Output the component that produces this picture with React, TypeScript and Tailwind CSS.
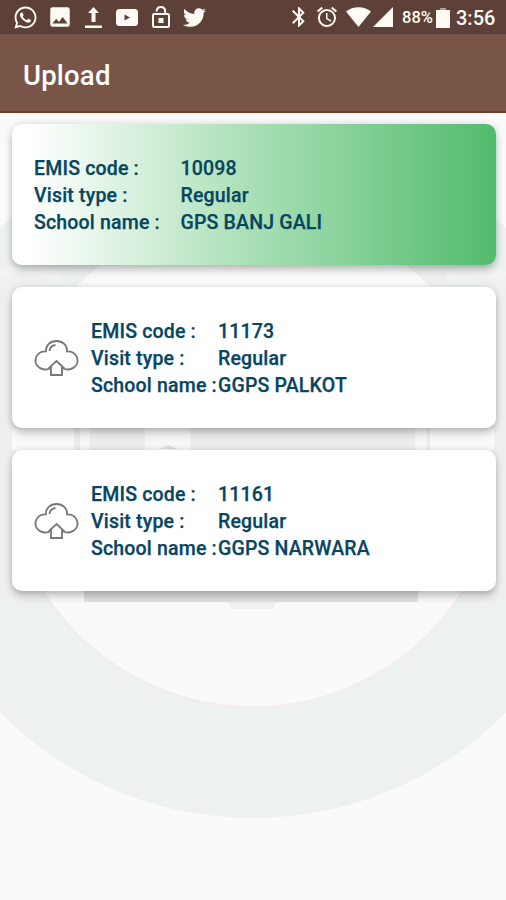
import { FaTwitter, FaWhatsapp } from "react-icons/fa";
import { MdAlarm, MdBluetooth, MdImage } from "react-icons/md";

type Visit = { code: string; type: string; school: string; uploaded?: boolean };

const visits: Visit[] = [
  { code: "10098", type: "Regular", school: "GPS BANJ GALI", uploaded: true },
  { code: "11173", type: "Regular", school: "GGPS PALKOT" },
  { code: "11161", type: "Regular", school: "GGPS NARWARA" },
];

function StatusBar() {
  return (
    <div className="flex h-[34px] items-center bg-[#5d4037] pl-[13px] text-[#fffaf3]">
      <FaWhatsapp className="size-[25px] shrink-0" />
      <MdImage className="ml-[9px] size-[26px] shrink-0" />
      <svg className="ml-[12px] h-[23px] w-[17px] shrink-0" viewBox="0 0 17 23" fill="currentColor">
        <path d="M8.500 1 14 7h-3.500v9h-4V7H3z" />
        <path d="M0 19.500h17V22H0z" />
      </svg>
      <svg className="ml-[14px] h-[17px] w-[22px] shrink-0" viewBox="0 0 22 17">
        <rect width="22" height="17" rx="3.5" fill="currentColor" />
        <path d="m8.500 5.500 5.500 3-5.500 3z" fill="#5d4037" />
      </svg>
      <svg className="ml-[14px] h-[22px] w-[18px] shrink-0" viewBox="0 0 18 22" fill="none" stroke="currentColor" strokeWidth="2">
        <rect x="1" y="8" width="16" height="13" rx="1.2" />
        <path d="M4.500 5.500C4.800 2.500 6.300 1 8.800 1s4.400 1.700 4.400 4.500V8" />
        <rect x="6.5" y="12" width="5" height="5" fill="currentColor" stroke="none" />
      </svg>
      <FaTwitter className="ml-[13px] size-[23px] shrink-0" />
      <MdBluetooth className="ml-[81px] size-[24px] shrink-0" />
      <MdAlarm className="ml-[4px] size-[24px] shrink-0" />
      <svg className="ml-[7px] h-[20px] w-[25px] shrink-0" viewBox="0 0 25 20" fill="currentColor">
        <path d="M0 4.500C7-1.300 18-1.300 25 4.500L12.500 20z" />
      </svg>
      <svg className="ml-[2px] size-[20px] shrink-0" viewBox="0 0 20 20" fill="currentColor">
        <path d="M20 0v20H0z" />
      </svg>
      <span className="ml-[9px] w-[34px] pt-[3px] text-[16.5px] font-medium whitespace-nowrap">88%</span>
      <svg className="mt-[2px] h-[20px] w-[14px] shrink-0" viewBox="0 0 14 20" fill="currentColor">
        <path d="M4 0h6v2H4z" opacity=".5" />
        <path d="M0 2h14v18H0z" />
      </svg>
      <span className="ml-[6px] pt-[2px] text-[20px] font-medium whitespace-nowrap">3:56</span>
    </div>
  );
}

function CloudUpload() {
  return (
    <svg className="h-[38px] w-[45px] shrink-0" viewBox="0 0 45 38" fill="none" stroke="#777" strokeWidth="1.8" strokeLinejoin="round">
      <path d="M16 29.500C12 31.500 6 30.500 3 26.500-1 20 3.500 12 12 12.500 11.500 6 16.500 2 22.500 2S33.500 6 33 12.500c8.500-.5 13 7.500 9 14-3 4-9 5-13 3" />
      <path d="m22.500 22 7 6.500H28V36H17v-7.500h-1.500z" strokeLinejoin="miter" />
      <path d="M15.500 12c.3-3.300 2.500-5.600 6-6" />
    </svg>
  );
}

function VisitCard({ visit }: { visit: Visit }) {
  const rows = [
    ["EMIS code :", visit.code],
    ["Visit type :", visit.type],
    ["School name :", visit.school],
  ];
  return (
    <div
      className={`flex h-[141px] items-center rounded-[10px] pl-[22px] shadow-[0_6px_8px_-1px_rgba(0,0,0,0.22),0_0_7px_rgba(0,0,0,0.14)] ${
        visit.uploaded ? "bg-[linear-gradient(90deg,#fff_4%,#a8dfb5_50%,#52bb6d_100%)]" : "bg-white"
      }`}
    >
      {!visit.uploaded && <CloudUpload />}
      <dl className={`pt-[2px] text-[19.5px] leading-[27px] font-medium tracking-[0.18px] text-[#08455f] [-webkit-text-stroke:0.25px_#08455f] ${visit.uploaded ? "" : "ml-[12px]"}`}>
        {rows.map(([label, value]) => (
          <div key={label} className="flex whitespace-nowrap">
            <dt className={visit.uploaded ? "w-[146.5px]" : "w-[127px]"}>{label}</dt>
            <dd>{value}</dd>
          </div>
        ))}
      </dl>
    </div>
  );
}

function Watermark() {
  return (
    <svg className="absolute inset-0 h-full w-full" viewBox="0 0 506 900" fill="none">
      <defs>
        <clipPath id="ring">
          <path d="M0 228 20 210h466l20 18v672H0z" />
        </clipPath>
      </defs>
      <g clipPath="url(#ring)">
        <circle cx="253" cy="462" r="356" fill="#edf1f0" />
        <circle cx="253" cy="459" r="250" fill="#f0eeee" />
        <circle cx="253" cy="459" r="247" fill="#fafafa" />
      </g>
      <path d="M0 274q20-10 60 2M506 276q-20-6-60 0" stroke="#f2f4f3" strokeWidth="9" />
      <path d="M0 286h16v314H0zM490 286h16v314h-16z" fill="#edf0ef" />
      <path d="M12 428h62v22H12zM430 428h64v22h-64z" fill="#fafafa" />
      <path d="M74 428h356v22H74z" fill="#ededed" />
      <path d="M80 428h10v22H80zM145 428h45v22h-45zM415 428h12v22h-12z" fill="#f7f7f7" />
      <path d="m160 449 8-4 10 4z" fill="#dedede" />
      <path d="M84 590h334v12H84z" fill="#e0e0e0" />
      <path d="M227 602h50l-4 7h-41z" fill="#f0f0f0" />
    </svg>
  );
}

export default function App() {
  return (
    <div className="relative flex h-[900px] w-[506px] flex-col overflow-hidden bg-[#fafafa] font-[Roboto,sans-serif]">
      <Watermark />
      <header className="relative">
        <StatusBar />
        <div className="flex h-[79px] items-center border-b-2 border-[#6b3e2a] bg-[#795548] pl-[23px] text-[27.5px] font-medium tracking-[0.2px] text-white">
          <h1 className="pt-[6px]">Upload</h1>
        </div>
      </header>
      <main className="relative flex flex-col gap-[22px] pt-[11px] pr-[10px] pl-[12px]">
        {visits.map((visit) => (
          <VisitCard key={visit.code} visit={visit} />
        ))}
      </main>
    </div>
  );
}
